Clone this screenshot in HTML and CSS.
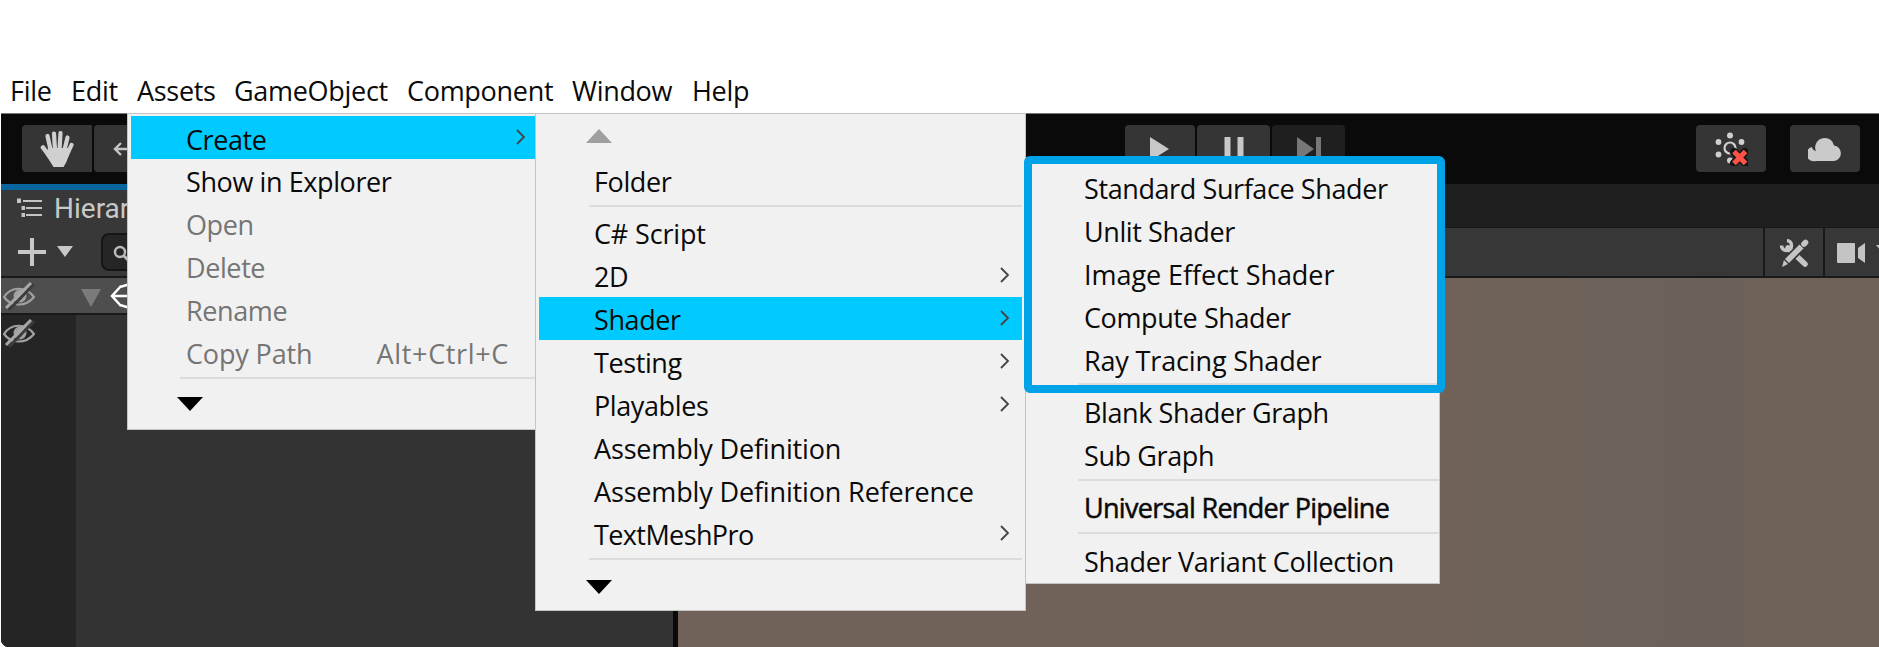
FILE: index.html
```html
<!DOCTYPE html>
<html lang="en">
<head>
<meta charset="utf-8">
<title>Unity</title>
<link rel="stylesheet" href="styles.css">
</head>
<body>
<svg class="defs" width="0" height="0">
  <symbol id="eye-off" viewBox="0 0 32 28"><path d="M1 15C8 4 23 4 31 15C23 25 8 25 1 15Z" fill="none" stroke="#a0a0a0" stroke-width="2.2"/><circle cx="17" cy="14" r="6.500" fill="#a0a0a0"/><path d="M6 28L31 2" stroke="#3c3c3c" stroke-width="3"/><path d="M3 26L28 1" stroke="#a8a8a8" stroke-width="3"/></symbol>
  <symbol id="chev" viewBox="0 0 10 16"><path d="M1 1L8 8L1 15" fill="none" stroke="#444" stroke-width="1.8"/></symbol>
</svg>
<nav class="menubar">
  <span class="m1">File</span><span class="m2">Edit</span><span class="m3">Assets</span><span class="m4">GameObject</span><span class="m5">Component</span><span class="m6">Window</span><span class="m7">Help</span>
</nav>
<main class="editor">
  <header class="toolbar">
    <div class="tools">
      <div class="btn hand"><svg width="34" height="38" viewBox="0 0 34 38"><g stroke="#d0d0d0" stroke-linecap="round" stroke-width="4.2"><path d="M11 22L7.500 6"/><path d="M15 20L14 3.500"/><path d="M19.500 20L20.500 3"/><path d="M24 22L27.500 7.500"/><path d="M26 27L31.500 15"/><path d="M10 27L3 17.500" stroke-width="4.600"/></g><path d="M8 18L28 18L28.500 26Q27 32 23.500 37H13.500L6 25Z" fill="#d0d0d0"/></svg></div>
      <div class="btn move"><svg width="20" height="20" viewBox="0 0 20 20"><path d="M20 10H2M8 4L2 10L8 16" fill="none" stroke="#c4c4c4" stroke-width="2.4"/></svg></div>
    </div>
    <div class="play">
      <div class="btn"><svg width="20" height="24" viewBox="0 0 20 24"><path d="M0 0L19 12L0 24Z" fill="#c8c8c8"/></svg></div>
      <div class="btn"><svg width="20" height="24" viewBox="0 0 20 24"><path d="M1 0H6V24H1ZM14 0H19V24H14Z" fill="#c8c8c8" stroke="#c8c8c8" stroke-linejoin="round"/></svg></div>
      <div class="btn off"><svg width="24" height="24" viewBox="0 0 24 24"><path d="M0 0L17 12L0 24ZM19 0H24V24H19Z" fill="#777"/></svg></div>
    </div>
    <div class="services">
      <div class="btn"><svg width="34" height="34" viewBox="0 0 34 34"><g fill="#cfcfcf"><circle cx="16" cy="3.500" r="3"/><circle cx="4.500" cy="10" r="2.900"/><circle cx="27.500" cy="10" r="2.900"/><circle cx="4.500" cy="22.500" r="2.900"/><circle cx="16" cy="28.500" r="3"/></g><circle cx="16" cy="16" r="5.500" fill="none" stroke="#cfcfcf" stroke-width="2.200"/><path d="M20 20L31.500 31M31 20L20 31" stroke="#151515" stroke-width="8" stroke-linecap="round"/><path d="M20 19.500L31.500 31.500M31.500 19.500L20 31.500" stroke="#ff5347" stroke-width="5"/></svg></div>
      <div class="btn"><svg width="34" height="26" viewBox="0 0 34 26"><path d="M8 25A7 7 0 0 1 3.500 11Q4.500 14 8 15Q6.500 12 7.500 9A9.500 9.500 0 0 1 26 9.500A7.800 7.800 0 0 1 26 25Z" fill="#cacaca"/></svg></div>
    </div>
  </header>
  <div class="panels">
    <section class="hierarchy">
      <div class="tab"><svg width="26" height="20" viewBox="0 0 26 20"><path d="M6 3H25M9 10H25M9 17H25" stroke="#c4c4c4" stroke-width="2"/><path d="M0 .5H4V5H0ZM4.500 8H8V12H4.500ZM4.500 15H8V19H4.500Z" fill="#c4c4c4"/></svg><span>Hierarchy</span></div>
      <div class="add"><svg class="plus" width="28" height="28" viewBox="0 0 28 28"><path d="M14 0V28M0 14H28" stroke="#c8c8c8" stroke-width="4"/></svg><svg class="caret" width="16" height="11" viewBox="0 0 16 11"><path d="M0 0H16L8 11Z" fill="#c8c8c8"/></svg><div class="search"><svg width="20" height="20" viewBox="0 0 20 20"><circle cx="7" cy="7" r="5" fill="none" stroke="#bbb" stroke-width="2.400"/><path d="M10.500 10.500L17 17" stroke="#bbb" stroke-width="3"/></svg></div></div>
      <div class="scene-row"><svg class="eye" width="32" height="28"><use href="#eye-off"/></svg><svg class="fold" width="20" height="18" viewBox="0 0 20 18"><path d="M0 0H20L10 18Z" fill="#7b7b7b"/></svg><svg class="logo" width="26" height="26" viewBox="0 0 26 26"><path d="M26 13H2M11 3L2 13L11 23M10 4L20 1M10 22L20 25" fill="none" stroke="#fff" stroke-width="2.500"/></svg></div>
      <div class="tree"><div class="gutter"><svg class="eye" width="32" height="28"><use href="#eye-off"/></svg></div></div>
    </section>
    <section class="scene">
      <div class="strip"></div>
      <div class="scene-tools">
        <div class="cell fill"></div>
        <div class="cell tool"><svg width="30" height="30" viewBox="0 0 30 30"><path d="M9 10L26 26" stroke="#c4c4c4" stroke-width="5.500" stroke-linecap="round"/><path d="M8 2.500A5 5 0 1 1 2.500 7.500" fill="none" stroke="#c4c4c4" stroke-width="3.600"/><path d="M7 24L24.500 6.500" stroke="#373737" stroke-width="9"/><path d="M8 23L22.500 8.500" stroke="#c4c4c4" stroke-width="5.600"/><path d="M25 6L26.500 4.500" stroke="#c4c4c4" stroke-width="5.600" stroke-linecap="round"/><path d="M5 22L9 26L3 29Z" fill="#c4c4c4"/></svg></div>
        <div class="cell cam"><svg width="28" height="20" viewBox="0 0 28 20"><path d="M1 1H17V19H1Z" fill="#c4c4c4" stroke="#c4c4c4" stroke-width="2" stroke-linejoin="round"/><path d="M28 0V20L21 15V5Z" fill="#c4c4c4"/></svg><svg class="more" width="12" height="8" viewBox="0 0 12 8"><path d="M0 0H12L6 7Z" fill="#c4c4c4"/></svg></div>
      </div>
      <div class="viewport"></div>
    </section>
  </div>
</main>

<div class="menu assets">
  <div class="item on"><span>Create</span><svg class="chev"><use href="#chev"/></svg></div>
  <div class="item"><span>Show in Explorer</span></div>
  <div class="item dim"><span>Open</span></div>
  <div class="item dim"><span>Delete</span></div>
  <div class="item dim"><span>Rename</span></div>
  <div class="item dim"><span class="wide">Copy Path</span><span class="key">Alt+Ctrl+C</span></div>
  <div class="sep"></div>
  <svg class="down" width="26" height="14" viewBox="0 0 26 14"><path d="M0 0H26L13 14Z"/></svg>
</div>
<div class="menu create">
  <svg class="up" width="26" height="14" viewBox="0 0 26 14"><path d="M0 14H26L13 0Z" fill="#9f9f9f"/></svg>
  <div class="item"><span>Folder</span></div>
  <div class="sep"></div>
  <div class="item"><span class="wide">C# Script</span></div>
  <div class="item"><span>2D</span><svg class="chev"><use href="#chev"/></svg></div>
  <div class="item on"><span>Shader</span><svg class="chev"><use href="#chev"/></svg></div>
  <div class="item"><span>Testing</span><svg class="chev"><use href="#chev"/></svg></div>
  <div class="item"><span>Playables</span><svg class="chev"><use href="#chev"/></svg></div>
  <div class="item"><span class="wide">Assembly Definition</span></div>
  <div class="item"><span class="wide">Assembly Definition Reference</span></div>
  <div class="item"><span class="tight">TextMeshPro</span><svg class="chev"><use href="#chev"/></svg></div>
  <div class="sep"></div>
  <svg class="down" width="26" height="14" viewBox="0 0 26 14"><path d="M0 0H26L13 14Z"/></svg>
</div>
<div class="menu shader">
  <div class="item"><span>Standard Surface Shader</span></div>
  <div class="item"><span>Unlit Shader</span></div>
  <div class="item"><span class="wider">Image Effect Shader</span></div>
  <div class="item"><span>Compute Shader</span></div>
  <div class="item"><span class="wide">Ray Tracing Shader</span></div>
  <div class="sep"></div>
  <div class="item"><span>Blank Shader Graph</span></div>
  <div class="item"><span>Sub Graph</span></div>
  <div class="sep"></div>
  <div class="item strong"><span>Universal Render Pipeline</span></div>
  <div class="sep last"></div>
  <div class="item"><span class="snug">Shader Variant Collection</span></div>
</div>
<div class="callout"></div>
</body>
</html>
```
FILE: styles.css
```css
* { box-sizing: border-box; }
body { margin: 0; width: 1879px; height: 647px; overflow: hidden; background: #fff; font-family: "Open Sans", "Noto Sans", sans-serif; font-size: 27px; color: #0a0a0a; display: flex; flex-direction: column; }
svg { display: block; flex: none; }
.defs { position: absolute; }
.menubar { height: 113px; padding: 72px 0 0 10px; display: flex; line-height: 38px; letter-spacing: -0.3px; white-space: nowrap; flex: none; }
.m1 { width: 61px; } .m2 { width: 66px; } .m3 { width: 97px; } .m4 { width: 173px; } .m5 { width: 165px; } .m6 { width: 120px; }
.editor { flex: 1; margin-left: 1px; display: flex; flex-direction: column; background: #0a0a0a; border-radius: 0 0 0 8px; overflow: hidden; border-top: 1px solid #777; }
.toolbar { height: 70px; flex: none; display: flex; padding: 11px 19px 0 21px; }
.btn { width: 70px; height: 47px; border-radius: 4px; background: #353535; display: flex; align-items: center; justify-content: center; }
.tools { display: flex; gap: 2px; width: 1103px; }
.hand { border-radius: 4px 0 0 4px; }
.move { justify-content: flex-start; padding-left: 19px; }
.play { display: flex; gap: 2px; flex: 1; }
.play .btn { width: 70px; }
.play .btn + .btn { width: 73px; }
.play .off { background: #1f1f1f; }
.services { display: flex; gap: 24px; }
.panels { flex: 1; display: flex; }
.hierarchy { width: 672px; border-top: 6px solid #0a669e; background: #383838; display: flex; flex-direction: column; }
.tab { height: 37px; display: flex; align-items: center; gap: 11px; padding: 0 0 1px 16px; color: #c8c8c8; font-family: Roboto, sans-serif; font-size: 28px; }
.add { height: 49px; display: flex; align-items: center; padding: 0 0 0 17px; }
.caret { margin: 0 28px 0 11px; }
.search { width: 120px; height: 38px; border: 2px solid #151515; border-radius: 8px; background: #262626; padding: 10px 0 0 10px; }
.scene-row { height: 39px; background: #4e4e4e; border-top: 2px solid #191919; border-bottom: 2px solid #191919; display: flex; align-items: center; padding-left: 2px; }
.fold { margin: 4px 9px 0 46px; }
.tree { flex: 1; background: #333; }
.gutter { width: 75px; height: 100%; background: #252525; padding: 4px 0 0 2px; }
.scene { flex: 1; margin-left: 5px; display: flex; flex-direction: column; }
.strip { height: 43px; background: #1f1f1f; }
.scene-tools { height: 51px; background: #191919; display: flex; gap: 2px; padding: 1px 0 2px; }
.cell { background: #373737; display: flex; align-items: center; }
.fill { flex: 1; }
.tool { width: 58px; padding: 2px 0 0 14px; }
.cam { width: 54px; padding: 2px 0 0 12px; overflow: hidden; }
.more { margin: -8px 0 0 11px; }
.viewport { flex: 1; background: linear-gradient(90deg, #706259 0 780px, #6c6259 960px, #6e6158 100%); }

.menu { position: absolute; background: #f1f1f1; border: 1px solid #c4c4c4; }
.item { height: 42.9px; line-height: 43px; padding-top: 1px; display: flex; white-space: nowrap; position: relative; letter-spacing: -0.4px; }
.on { background: #00caff; }
.dim { color: #757575; }
.wide { letter-spacing: -0.15px; }
.wider { letter-spacing: -0.05px; }
.snug { letter-spacing: -0.3px; }
.tight { letter-spacing: -0.6px; }
.strong { -webkit-text-stroke: 0.5px #0a0a0a; letter-spacing: -0.7px; }
.chev { width: 10px; height: 16px; position: absolute; right: 12px; top: 13px; }
.key { margin-left: auto; padding-right: 26px; letter-spacing: 0.65px; }
.sep { height: 2px; background: #dcdcdc; }

.assets { left: 127px; top: 113px; width: 409px; height: 317px; padding: 2px 0 0 3px; }
.assets .item { padding-left: 55px; padding-top: 1.5px; }
.assets .chev { right: 9px; }
.assets .sep { margin: 4px 0 18px 49px; }
.assets .down { margin-left: 46px; }
.create { left: 535px; top: 113px; width: 491px; height: 498px; padding: 15px 3px 0 3px; }
.create .up { margin: 0 0 16px 47px; }
.create .item { padding-left: 55px; }
.create .sep { margin: 3px 0 4.500px 50px; }
.create .sep + .down { margin: 20px 0 0 47px; }
.shader { left: 1025px; top: 157px; width: 415px; height: 427px; padding: 8px 0 0 2px; }
.shader .item { padding-left: 56px; }
.shader .sep { margin: 3px 0 5px 50px; }
.shader .sep + .strong { margin-top: -1px; }
.shader .last { margin-top: 4px; }
.callout { position: absolute; left: 1024px; top: 156px; width: 421px; height: 237px; border: 8px solid #00a2e8; border-radius: 6px; }
```
